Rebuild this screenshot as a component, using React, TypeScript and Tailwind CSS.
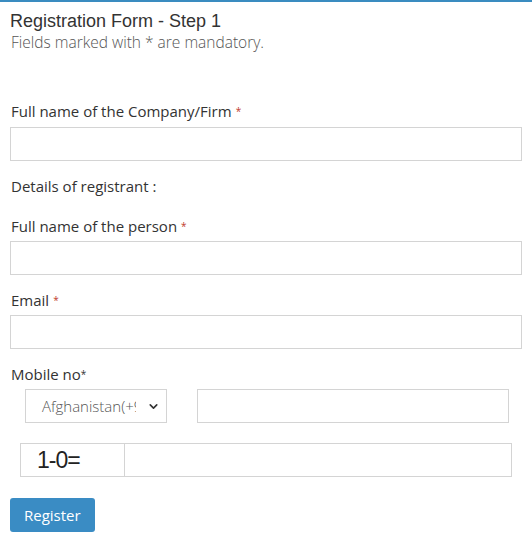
import { ChevronDown } from "lucide-react";

const label = "block text-[15px] text-[#333] font-['Open_Sans',sans-serif]";
const input = "block h-[34px] w-full border border-[#d4d4d4] bg-white";

function Req() {
  return <span className="ml-1 text-[10px] align-top text-[#c0392b]">*</span>;
}

export default function App() {
  return (
    <div className="min-h-[553px] w-[532px] bg-white border-t-2 border-[#3a8cc0] font-['Open_Sans',sans-serif]">
      <div className="pl-[10px] pr-[10px]">
        <h1 className="pt-[8px] text-[18px] leading-[22px] text-[#333] font-['Liberation_Sans',Arial,sans-serif]">
          Registration Form - Step 1
        </h1>
        <p className="text-[15.5px] leading-[20px] font-light text-[#555] pl-[1px]">
          Fields marked with * are mandatory.
        </p>

        <label className={`${label} mt-[49px] leading-[20px] pl-[1px]`}>
          Full name of the Company/Firm<Req />
        </label>
        <input className={`${input} mt-[6px]`} />

        <p className={`${label} mt-[15px] leading-[20px] pl-[1px]`}>Details of registrant :</p>

        <label className={`${label} mt-[20px] leading-[20px] pl-[1px]`}>
          Full name of the person<Req />
        </label>
        <input className={`${input} mt-[5px]`} />

        <label className={`${label} mt-[15px] leading-[20px] pl-[1px]`}>
          Email<Req />
        </label>
        <input className={`${input} mt-[5px]`} />

        <label className={`${label} mt-[15px] leading-[20px] pl-[1px]`}>
          Mobile no<span className="text-[10px] align-top">*</span>
        </label>
        <div className="mt-[5px] flex items-center pl-[15px]">
          <div className="relative flex h-[34px] w-[142px] items-center border border-[#d4d4d4] bg-white">
            <span className="pl-[16px] text-[15px] font-light text-[#555] whitespace-nowrap overflow-hidden w-[110px]">
              Afghanistan(+93)
            </span>
            <ChevronDown className="absolute right-[6px] top-[10px] h-[13px] w-[13px] text-[#333]" strokeWidth={3} />
          </div>
          <input className="ml-[30px] h-[34px] w-[312px] border border-[#d4d4d4] bg-white" />
        </div>

        <div className="mt-[20px] flex pl-[10px]">
          <div className="flex h-[34px] w-[105px] items-center border border-[#d4d4d4] bg-white pl-[16px] text-[23px] tracking-[-1px] text-[#222] font-['Liberation_Sans',Arial,sans-serif]">
            1-0=
          </div>
          <input className="h-[34px] w-[387px] border border-l-0 border-[#d4d4d4] bg-white" />
        </div>

        <button className="mt-[21px] h-[34px] rounded-[3px] bg-[#3a8cc4] px-[14px] text-[15px] text-white">
          Register
        </button>
      </div>
    </div>
  );
}
